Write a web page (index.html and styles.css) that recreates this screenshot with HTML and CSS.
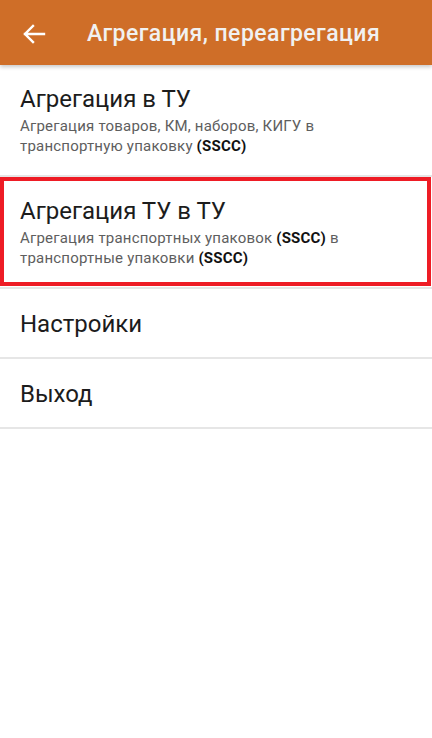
FILE: index.html
```html
<!DOCTYPE html>
<html lang="ru">
<head>
<meta charset="utf-8">
<title>Агрегация, переагрегация</title>
<link rel="stylesheet" href="styles.css">
</head>
<body>
<div class="app">
  <header class="bar">
    <svg class="back" width="24" height="20" viewBox="0 0 24 20">
      <path d="M3 10H22M11 2L3 10L11 18" fill="none" stroke="#ffffff" stroke-width="2.4" stroke-linecap="square"/>
    </svg>
    <div class="bar-title">Агрегация, переагрегация</div>
  </header>
  <ul class="menu">
    <li class="item">
      <div class="title">Агрегация в ТУ</div>
      <div class="sub">Агрегация товаров, КМ, наборов, КИГУ в<br>транспортную упаковку <b>(SSCC)</b></div>
    </li>
    <li class="item selected">
      <div class="title">Агрегация ТУ в ТУ</div>
      <div class="sub">Агрегация транспортных упаковок <b>(SSCC)</b> в<br>транспортные упаковки <b>(SSCC)</b></div>
    </li>
    <li class="item simple">
      <div class="title">Настройки</div>
    </li>
    <li class="item simple">
      <div class="title">Выход</div>
    </li>
  </ul>
</div>
</body>
</html>
```
FILE: styles.css
```css
* { box-sizing: border-box; }
html, body { margin: 0; padding: 0; background: #ffffff; }
body { font-family: Roboto, "Noto Sans", "Liberation Sans", sans-serif; }
.app { width: 432px; min-height: 738px; background: #fff; }
.bar {
  height: 65px;
  background: #cf6e28;
  display: flex;
  align-items: center;
  padding-left: 22px;
  box-shadow: 0 2px 4px rgba(0,0,0,0.22);
  position: relative;
  z-index: 1;
}
.back { display: block; margin-top: 2px; }
.bar-title {
  margin-left: 41px;
  color: #f1f1f1;
  font-size: 23px;
  font-weight: 500;
  letter-spacing: 0.45px;
  margin-top: 1px;
}
.menu { list-style: none; margin: 0; padding: 0; }
.item {
  position: relative;
  padding: 20px 20px 19px 20px;
  border-bottom: 2px solid #e6e6e6;
}
.title {
  font-size: 24px;
  line-height: 28px;
  color: #1c1c1c;
}
.sub {
  margin-top: 3px;
  font-size: 15px;
  line-height: 20px;
  letter-spacing: 0.2px;
  color: #5e5e5e;
}
.sub b { color: #111; font-weight: 700; }
.item.simple { padding-top: 21px; padding-bottom: 19px; }
.item.selected::after {
  content: "";
  position: absolute;
  top: 0;
  left: 0;
  right: 1px;
  bottom: 1px;
  border: 4px solid #ee1c25;
}
```
